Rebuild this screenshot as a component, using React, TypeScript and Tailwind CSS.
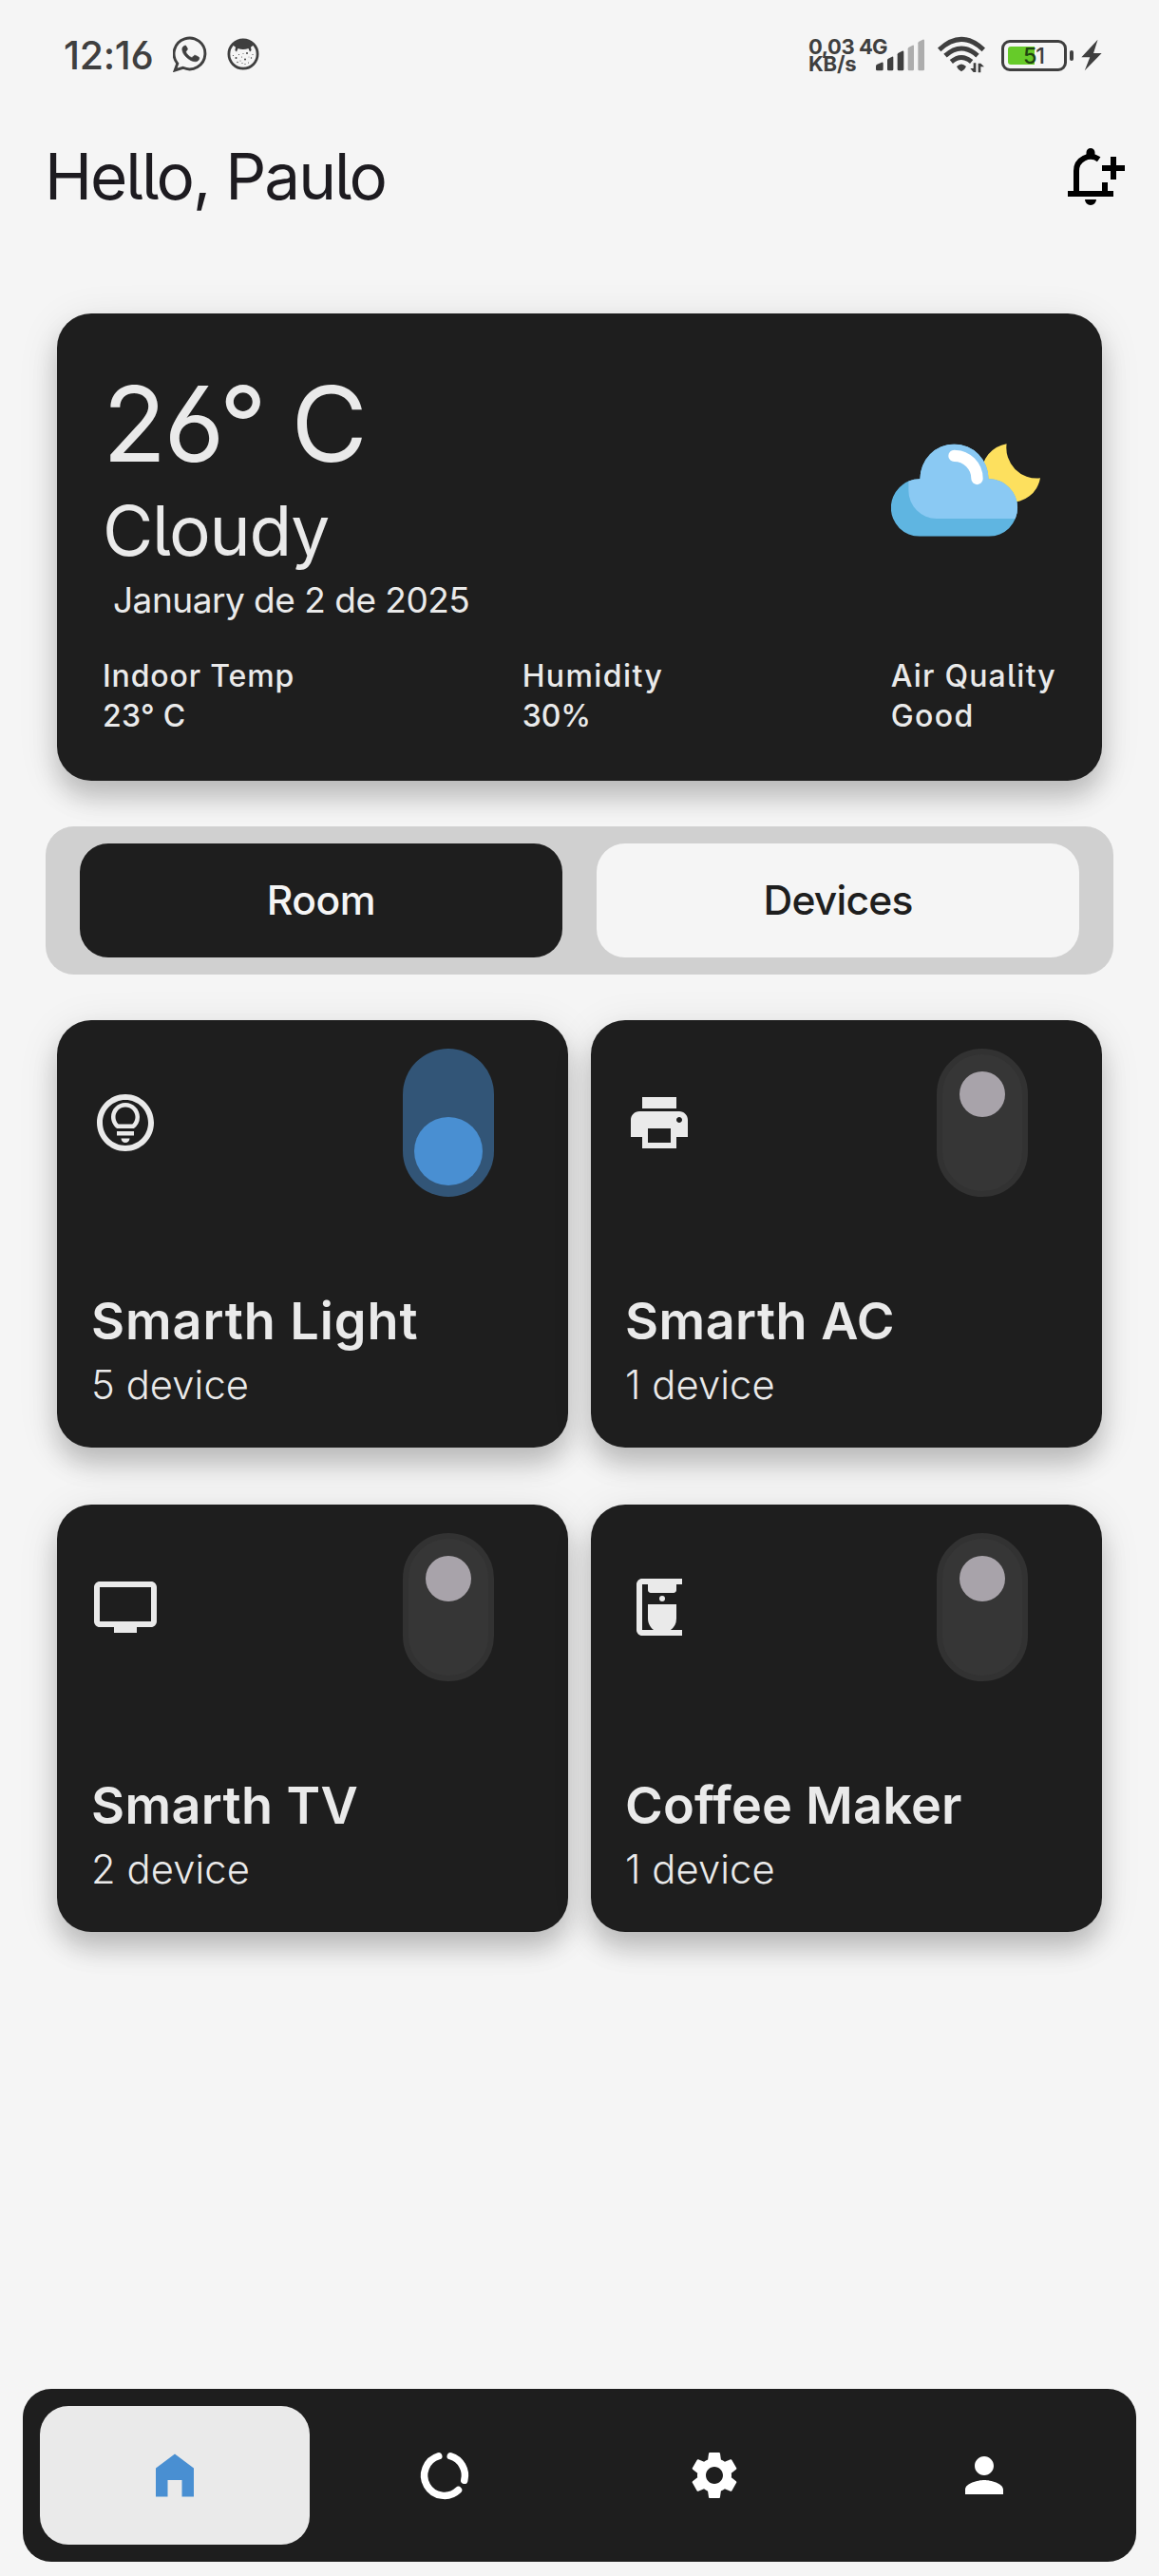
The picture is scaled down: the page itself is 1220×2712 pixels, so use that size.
import type { ReactNode } from "react";
import { MdCoffeeMaker, MdOutlineLightbulbCircle, MdPerson, MdPrint, MdSettings, MdTv } from "react-icons/md";

function WhatsappGlyph() {
  return (
    <svg width="37" height="38" viewBox="0 0 37 38" fill="none">
      <path d="M2.200 36 L4.800 28.800 A16.400 16.400 0 1 1 10.600 33.300 Z" stroke="#3f3f3f" strokeWidth="2.900" />
      <path
        d="M12.800 10.100c-1.700.3-3.100 1.900-3 4 .2 3 2 6 4.700 8.400 3 2.700 6.200 4.300 9.200 4.300 2 0 3.600-1.200 4-3 .2-.9 0-1.500-.7-1.900l-3.300-1.600c-.7-.3-1.200-.1-1.700.4l-1.500 1.500c-.5.4-1 .3-1.600 0-2.200-1.200-3.900-2.900-5-5-.3-.6-.2-1 .2-1.400l1-1.300c.4-.5.4-.9.2-1.400l-1.300-2.500c-.3-.5-.6-.6-1.200-.5z"
        fill="#3f3f3f"
        stroke="#3f3f3f"
        strokeWidth=".6"
      />
    </svg>
  );
}

function FaceGlyph() {
  return (
    <svg width="34" height="34" viewBox="0 0 34 34">
      <circle cx="17" cy="17" r="15.100" fill="none" stroke="#3f3f3f" strokeWidth="2.800" />
      <path d="M6 6.500C9 3 13 1.500 17 1.500s8 1.500 11 5c-.8 1.500-1.800 2.500-3 3.200l.6 3.300-1.600 1.500-1.500-3.500c-3.500 1.400-7.500 1.400-11 0L10 14.500 8.400 13 9 9.700C7.800 9 6.800 8 6 6.500z" fill="#3f3f3f" />
      <g fill="#3f3f3f">
        <circle cx="9.500" cy="21" r="1" />
        <circle cx="19" cy="22.600" r="1" />
        <circle cx="21" cy="16" r="1" />
        <circle cx="12.500" cy="17.500" r=".6" />
        <circle cx="15.500" cy="20" r=".5" />
        <circle cx="25.500" cy="21" r=".7" />
        <circle cx="14" cy="24" r=".5" />
        <circle cx="11" cy="25.500" r=".7" />
        <circle cx="16" cy="26.500" r=".6" />
        <circle cx="19" cy="27.500" r=".6" />
        <circle cx="22.500" cy="26" r=".5" />
        <circle cx="6.500" cy="18.500" r=".6" />
        <circle cx="27" cy="17.500" r=".6" />
        <circle cx="23" cy="20" r=".4" />
        <circle cx="17" cy="16.500" r=".5" />
      </g>
    </svg>
  );
}

function SignalGlyph() {
  return (
    <svg width="51" height="34" viewBox="312 124 153 102">
      <g fill="#3f3f3f">
        <path d="M312 210q0-4 4-6l14-6q5-1 5 3v19q0 4-4 4h-15q-4 0-4-4z" />
        <path d="M348 191q0-3 3-5l12-6q4-1 4 3v37q0 4-4 4h-11q-4 0-4-4z" />
        <path d="M380 173q0-3 3-5l12-6q5-1 5 3v55q0 4-4 4h-12q-4 0-4-4z" />
      </g>
      <g fill="#adadad">
        <path d="M413 155q0-3 3-5l12-6q4-1 4 3v73q0 4-4 4h-11q-4 0-4-4z" />
        <path d="M445 137q0-3 3-5l12-6q5-1 5 3v91q0 4-4 4h-12q-4 0-4-4z" />
      </g>
    </svg>
  );
}

function WifiGlyph() {
  return (
    <svg width="50" height="39" viewBox="508 116 150 117">
      <g fill="none" stroke="#3f3f3f" strokeWidth="15">
        <path d="M513 159q70-66 140 0" />
        <path d="M532 178q51-46 102 0" />
        <path d="M551 197q32-27 64 0" />
      </g>
      <path d="M568 212q15-15 30 0-5 12-15 16-10-4-15-16z" fill="#3f3f3f" />
      <path d="M621 201h8v29h-8l-10-12h10zM636 231h8v-18h11l-11-11h-8z" fill="#3f3f3f" />
    </svg>
  );
}

function Battery() {
  return (
    <div className="flex items-center">
      <div className="relative flex h-[33px] w-[69px] items-center rounded-[9px] border-[3px] border-[#3f3f3f] pl-[4px]">
        <div className="h-[19px] w-[28px] rounded-l-[3px] bg-[#66cb29]" />
        <span className="absolute left-[20px] top-0 text-[23.500px] font-medium leading-[27px] tracking-[-1.200px] text-[#3f3f3f]">
          <span className="text-[#1f4410]">5</span>1
        </span>
      </div>
      <div className="ml-[3px] h-[11px] w-[4px] rounded-[2px] bg-[#3f3f3f]" />
      <svg className="ml-[8px]" width="22" height="34" viewBox="957 124 64 99">
        <path d="M1008 126 958 180h26l-16 41 52-53h-25z" fill="#3f3f3f" />
      </svg>
    </div>
  );
}

function StatusBar() {
  return (
    <div className="flex h-[114px] items-start justify-between pl-[67px] pr-[60px] text-[#3f3f3f]">
      <div className="flex pt-[38px]">
        <span className="w-[115px] text-[41px] font-medium leading-[40px] tracking-[-0.300px]">12:16</span>
        <WhatsappGlyph />
        <div className="ml-[20px] pt-[2px]">
          <FaceGlyph />
        </div>
      </div>
      <div className="flex pt-[38px]">
        <div className="flex w-[53px] flex-col text-[22px] font-bold leading-[18px]">
          <span className="pt-[2px] tracking-[-0.400px]">0,03</span>
          <span className="tracking-[-0.200px]">KB/s</span>
        </div>
        <span className="w-[18px] whitespace-nowrap pt-[2px] text-[22px] font-bold leading-[18px] tracking-[-0.800px]">4G</span>
        <div className="pt-[3px]">
          <SignalGlyph />
        </div>
        <div className="ml-[14px]">
          <WifiGlyph />
        </div>
        <div className="ml-[17px] pt-[3px]">
          <Battery />
        </div>
      </div>
    </div>
  );
}

function BellAddIcon() {
  return (
    <svg width="72" height="72" viewBox="0 0 24 24">
      <path d="M4 18h16v2H4z" />
      <path d="M7 18v-7a5 5 0 0 1 7.900-4.100" fill="none" stroke="black" strokeWidth="2" />
      <path d="M10.500 6.200V4.500a1.500 1.500 0 0 1 3 0v1.700zM10 21h4a2 2 0 0 1-4 0zM16 15h2v3h-2zM19 6h2v3h3v2h-3v3h-2v-3h-3V9h3z" />
    </svg>
  );
}

function CloudNightIcon() {
  return (
    <svg width="157" height="98" viewBox="173 142 470 292">
      <defs>
        <clipPath id="cloud">
          <path d="M263 434a90.500 90.500 0 0 1 0-181h1a108 110 0 0 1 216 0h1a90.500 90.500 0 0 1 0 181z" />
        </clipPath>
      </defs>
      <path d="M537 142A96 96 0 0 0 643 250 93 93 0 1 1 537 142z" fill="#fde05e" />
      <g clipPath="url(#cloud)">
        <path d="M170 140h410v300H170z" fill="#5fb5e1" />
        <path d="M228 100v190a89 88 0 0 0 88 88h264V100z" fill="#8ac9f3" />
      </g>
      <path d="M372 180a72 72 0 0 1 72 72" fill="none" stroke="white" strokeWidth="37" strokeLinecap="round" />
    </svg>
  );
}

function HomeIcon() {
  return (
    <svg width="60" height="60" viewBox="0 0 24 24" fill="#498fd2">
      <path d="M4 21V9l8-6 8 6v12h-5v-7H9v7z" />
    </svg>
  );
}

function DataUsageIcon() {
  return (
    <svg width="60" height="60" viewBox="0 0 24 24" fill="none" stroke="white" strokeWidth="3" strokeLinecap="round">
      <path d="M9.500 3.900a8.500 8.500 0 1 0 8.300 14.300M14.500 3.900a8.500 8.500 0 0 1 5.800 10.200" />
    </svg>
  );
}

function Reading({ label, value, labelClass, valueClass }: { label: string; value: string; labelClass: string; valueClass: string }) {
  return (
    <div className="flex flex-col text-[32px] font-medium leading-[42px]">
      <span className={labelClass}>{label}</span>
      <span className={valueClass}>{value}</span>
    </div>
  );
}

function WeatherCard() {
  return (
    <section className="mx-[60px] mt-[78px] h-[492px] rounded-[36px] bg-[#1e1e1e] px-12 pt-[61px] text-[#eaeaea] shadow-[0_18px_26px_rgba(0,0,0,0.18),0_8px_44px_rgba(0,0,0,0.1)]">
      <div className="flex justify-between">
        <div className="flex flex-col font-[380]">
          <span className="text-[110px] leading-[110px] tracking-[-2.600px]">26° C</span>
          <span className="mt-[18px] text-[73px] leading-[80px] tracking-[-1.200px]">Cloudy</span>
          <span className="ml-[11px] mt-[10px] text-[37px] leading-[46px] tracking-[-0.500px]">January de 2 de 2025</span>
        </div>
        <div className="mr-[17px] mt-[76px]">
          <CloudNightIcon />
        </div>
      </div>
      <div className="mt-[36px] flex justify-between">
        <Reading label="Indoor Temp" value="23° C" labelClass="tracking-[0.850px]" valueClass="tracking-[0.300px]" />
        <Reading label="Humidity" value="30%" labelClass="tracking-[1.400px]" valueClass="tracking-normal" />
        <Reading label="Air Quality" value="Good" labelClass="tracking-[1.200px]" valueClass="tracking-[1.400px]" />
      </div>
    </section>
  );
}

function Toggle({ on }: { on: boolean }) {
  return on ? (
    <div className="flex h-[156px] w-24 flex-col items-center justify-end rounded-full bg-[#325577] pb-3">
      <div className="size-[72px] rounded-full bg-[#498fd2]" />
    </div>
  ) : (
    <div className="flex h-[156px] w-24 flex-col items-center rounded-full border-[6px] border-[#323232] bg-[#363636] pt-[18px]">
      <div className="size-12 rounded-full bg-[#a8a3aa]" />
    </div>
  );
}

interface Device {
  name: string;
  count: string;
  icon: ReactNode;
  on: boolean;
  nameClass: string;
}

const devices: Device[] = [
  { name: "Smarth Light", count: "5 device", icon: <MdOutlineLightbulbCircle size={72} />, on: true, nameClass: "tracking-[0.900px]" },
  { name: "Smarth AC", count: "1 device", icon: <MdPrint size={72} />, on: false, nameClass: "tracking-[0.450px]" },
  { name: "Smarth TV", count: "2 device", icon: <MdTv size={72} />, on: false, nameClass: "tracking-[0.350px]" },
  { name: "Coffee Maker", count: "1 device", icon: <MdCoffeeMaker size={72} />, on: false, nameClass: "tracking-[0.200px]" },
];

function DeviceCard({ name, count, icon, on, nameClass }: Device) {
  return (
    <div className="flex h-[450px] flex-col rounded-[36px] bg-[#1e1e1e] pt-[30px] text-[#eaeaea] shadow-[0_18px_26px_rgba(0,0,0,0.18),0_8px_44px_rgba(0,0,0,0.1)]">
      <div className="flex items-center justify-between pl-9 pr-[78px]">
        {icon}
        <Toggle on={on} />
      </div>
      <div className="mt-[98px] flex flex-col pl-9">
        <span className={`text-[54px] font-semibold leading-[66px] ${nameClass}`}>{name}</span>
        <span className="mt-[9px] text-[41.700px] font-[360] leading-[50px] tracking-[0.100px]">{count}</span>
      </div>
    </div>
  );
}

export default function App() {
  return (
    <div className="flex h-[2712px] w-[1220px] flex-col overflow-hidden bg-[#f5f5f5] font-['Inter',sans-serif] [font-feature-settings:'cv03','cv05']">
      <StatusBar />
      <header className="flex h-[138px] items-center justify-between pl-[47px] pr-9">
        <h1 className="mt-[5px] text-[67.400px] font-[400] leading-[80px] tracking-[-2px] text-[#1d1b20]">Hello, Paulo</h1>
        <BellAddIcon />
      </header>
      <WeatherCard />
      <div className="mx-12 mt-12 flex h-[156px] gap-9 rounded-[30px] bg-[#d0d0d0] px-9 py-[18px] text-[42.600px] font-medium">
        <button className="flex-1 rounded-[30px] bg-[#1e1e1e] tracking-[-0.500px] text-[#f5f5f5]">Room</button>
        <button className="flex-1 rounded-[30px] bg-[#f5f5f5] tracking-[-0.800px] text-[#1e1e1e]">Devices</button>
      </div>
      <div className="mx-[60px] mt-12 grid grid-cols-2 gap-x-6 gap-y-[60px]">
        {devices.map((d) => (
          <DeviceCard key={d.name} {...d} />
        ))}
      </div>
      <nav className="mx-6 mb-[15.500px] mt-auto flex h-[182px] items-center rounded-[30px] bg-[#1e1e1e] px-[18px] text-white">
        <div className="flex h-[146px] flex-1 items-center justify-center rounded-[30px] bg-[#eaeaea]">
          <HomeIcon />
        </div>
        <div className="flex flex-1 justify-center">
          <DataUsageIcon />
        </div>
        <div className="flex flex-1 justify-center">
          <MdSettings size={60} />
        </div>
        <div className="flex flex-1 justify-center">
          <MdPerson size={60} />
        </div>
      </nav>
    </div>
  );
}
